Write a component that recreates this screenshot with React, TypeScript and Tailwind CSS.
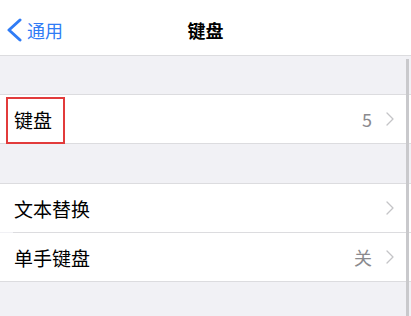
import { ChevronRight } from "lucide-react";

const font = { fontFamily: '"Noto Sans CJK SC", "Noto Sans", sans-serif' };

function Row({
  label,
  value,
  boxed,
  divider,
}: {
  label: string;
  value?: string;
  boxed?: boolean;
  divider?: boolean;
}) {
  return (
    <div className="relative h-[48px] bg-white flex items-center pl-[14px] pr-[9px]">
      {boxed && (
        <div className="absolute left-[6px] top-[2px] w-[59px] h-[47px] border-2 border-[#e23b3b]" />
      )}
      <span className="text-[19px] text-black flex-1 leading-none">{label}</span>
      {value && <span className="text-[18px] text-[#8a8a8e] mr-[6px] leading-none">{value}</span>}
      <ChevronRight size={24} strokeWidth={1.3} className="text-[#c4c4c7]" />
      {divider && <div className="absolute left-[13px] right-0 -bottom-px h-px bg-[#dcdcdf]" />}
    </div>
  );
}

export default function App() {
  return (
    <div className="relative w-[411px] h-[316px] bg-[#f1f1f5] overflow-hidden" style={font}>
      <div className="relative h-[56px] bg-white border-b border-[#dcdcdf] flex items-center pt-[5px]">
        <div className="flex items-center pl-[4px] text-[#2f7cf6]">
          <svg width="18" height="24" viewBox="0 0 18 24" fill="none">
            <path d="M16 2 L5 12 L16 22" stroke="currentColor" strokeWidth="3" strokeLinecap="round" strokeLinejoin="round" />
          </svg>
          <span className="text-[18px] ml-[5px]">通用</span>
        </div>
        <div className="absolute inset-x-0 top-[5px] bottom-0 flex items-center justify-center pointer-events-none">
          <span className="text-[18px] font-bold text-black">键盘</span>
        </div>
      </div>
      <div className="h-[38px]" />
      <div className="border-y border-[#dcdcdf]">
        <Row label="键盘" value="5" boxed />
      </div>
      <div className="h-[39px]" />
      <div className="border-y border-[#dcdcdf] flex flex-col gap-px">
        <Row label="文本替换" divider />
        <Row label="单手键盘" value="关" />
      </div>
      <div className="absolute right-[2px] top-[59px] bottom-0 w-[3px] bg-[#c9c9cc]" />
    </div>
  );
}
